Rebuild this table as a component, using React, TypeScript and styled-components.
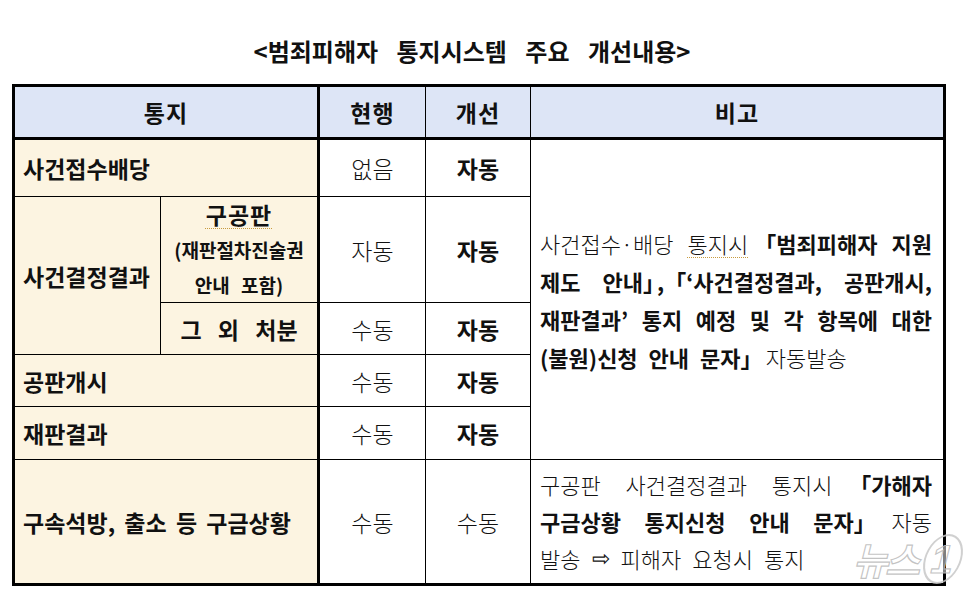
import React from 'react';
import styled, { createGlobalStyle } from 'styled-components';

const GlobalStyle = createGlobalStyle`
  html, body {
    margin: 0;
    padding: 0;
    background: #ffffff;
  }
  body {
    font-family: 'Noto Sans CJK KR', 'Noto Sans', sans-serif;
    color: #111111;
  }
`;

const Page = styled.div`
  position: relative;
  width: 972px;
  height: 598px;
  padding-left: 12px;
  box-sizing: border-box;
  overflow: hidden;
`;

const Title = styled.h1`
  margin: 0;
  width: 920px;
  height: 84px;
  padding-top: 35px;
  box-sizing: border-box;
  text-align: center;
  font-size: 24px;
  font-weight: 700;
  line-height: 32px;
  word-spacing: 13px;
`;

const Table = styled.table`
  border-collapse: collapse;
  table-layout: fixed;
  width: 934px;
  border: 3px solid #000;
`;

const Row = styled.tr<{ $h: number }>`
  height: ${(p) => p.$h}px;
`;

const HeadCell = styled.th<{ $edge?: boolean }>`
  padding: 0;
  background: #dde5f6;
  border: 1px solid #000;
  border-bottom: 3px solid #000;
  border-left: ${(p) => (p.$edge ? '3px' : '1px')} solid #000;
  font-size: 23px;
  font-weight: 700;
  text-align: center;
  vertical-align: middle;
  letter-spacing: 1px;
`;

const LabelCell = styled.td<{ $center?: boolean }>`
  padding: 0 ${(p) => (p.$center ? '0' : '8px')};
  background: #fcf4e1;
  border: 1px solid #000;
  font-size: 23px;
  font-weight: 700;
  text-align: ${(p) => (p.$center ? 'center' : 'left')};
  vertical-align: middle;
  word-spacing: 4px;
  white-space: nowrap;
`;

const SpacedLabel = styled.span`
  word-spacing: 11px;
`;

const StackLine = styled.div<{ $small?: boolean }>`
  font-size: ${(p) => (p.$small ? '19px' : '23px')};
  line-height: 35px;
  letter-spacing: ${(p) => (p.$small ? '0' : '1px')};
  word-spacing: ${(p) => (p.$small ? '7px' : '0')};
`;

const Squiggle = styled.span`
  text-decoration: underline dotted #c79a3e;
  text-underline-offset: 4px;
  text-decoration-thickness: 1px;
`;

const ValueCell = styled.td<{ $bold?: boolean; $edge?: boolean }>`
  padding: 0;
  border: 1px solid #000;
  border-left: ${(p) => (p.$edge ? '3px' : '1px')} solid #000;
  font-size: 23px;
  font-weight: ${(p) => (p.$bold ? 700 : 300)};
  text-align: center;
  vertical-align: middle;
`;

const NoteCell = styled.td<{ $lh: number }>`
  padding: 0 11px 0 9px;
  border: 1px solid #000;
  font-size: 22px;
  font-weight: 300;
  line-height: ${(p) => p.$lh}px;
  vertical-align: middle;
`;

/* one justified line: the words are spread by flex, as Word spreads them at spaces */
const NoteLine = styled.div<{ $last?: boolean }>`
  display: flex;
  justify-content: ${(p) => (p.$last ? 'flex-start' : 'space-between')};
  gap: ${(p) => (p.$last ? '11px' : '4px')};
  white-space: nowrap;
`;

const B = styled.b`
  font-weight: 700;
`;

/* full-width corner brackets: trim the empty half of the em box */
const Bracket = styled.span<{ $close?: boolean }>`
  margin-left: ${(p) => (p.$close ? '0' : '-0.36em')};
  margin-right: ${(p) => (p.$close ? '-0.36em' : '0')};
`;

const Arrow = styled.span`
  font-family: 'DejaVu Sans', sans-serif;
  font-size: 22px;
`;

const Watermark = styled.div`
  position: absolute;
  right: 10px;
  bottom: 14px;
  display: flex;
  align-items: center;
  gap: 3px;
  transform: skewX(-14deg);
  pointer-events: none;
`;

const WmText = styled.span`
  font-family: 'Noto Sans CJK KR', sans-serif;
  font-size: 38px;
  font-weight: 700;
  line-height: 44px;
  letter-spacing: -3px;
  color: rgba(255, 255, 255, 0.55);
  -webkit-text-stroke: 1.2px rgba(185, 185, 185, 0.85);
`;

const WmBadge = styled.span`
  display: inline-flex;
  align-items: center;
  justify-content: center;
  width: 34px;
  height: 46px;
  border: 2px solid rgba(200, 200, 200, 0.85);
  border-radius: 50%;
  font-family: 'Liberation Sans', sans-serif;
  font-size: 40px;
  font-weight: 700;
  line-height: 1;
  color: rgba(255, 255, 255, 0.5);
  -webkit-text-stroke: 1.2px rgba(185, 185, 185, 0.85);
`;

const statusRows = [
  { now: '없음', next: '자동' },
  { now: '자동', next: '자동' },
  { now: '수동', next: '자동' },
  { now: '수동', next: '자동' },
  { now: '수동', next: '자동' },
];

const boldWords = (text: string) => text.split(' ').map((w, i) => <B key={i}>{w}</B>);
const plainWords = (text: string) => text.split(' ').map((w, i) => <span key={i}>{w}</span>);

export default function App() {
  return (
    <Page>
      <GlobalStyle />
      <Title>&lt;범죄피해자 통지시스템 주요 개선내용&gt;</Title>
      <Table>
        <colgroup>
          <col style={{ width: 147 }} />
          <col style={{ width: 158 }} />
          <col style={{ width: 107 }} />
          <col style={{ width: 105 }} />
          <col style={{ width: 414 }} />
        </colgroup>
        <thead>
          <Row $h={53}>
            <HeadCell colSpan={2}>통지</HeadCell>
            <HeadCell $edge>현행</HeadCell>
            <HeadCell>개선</HeadCell>
            <HeadCell>비고</HeadCell>
          </Row>
        </thead>
        <tbody>
          <Row $h={58}>
            <LabelCell colSpan={2}>사건접수배당</LabelCell>
            <ValueCell $edge>{statusRows[0].now}</ValueCell>
            <ValueCell $bold>{statusRows[0].next}</ValueCell>
            <NoteCell rowSpan={5} $lh={38}>
              <NoteLine>
                <span>사건접수·배당</span>
                <Squiggle>통지시</Squiggle>
                <B>
                  <Bracket>「</Bracket>범죄피해자
                </B>
                <B>지원</B>
              </NoteLine>
              <NoteLine>
                <B>제도</B>
                <B>
                  안내<Bracket $close>」</Bracket>,「‘사건결정결과,
                </B>
                <B>공판개시,</B>
              </NoteLine>
              <NoteLine>{boldWords('재판결과’ 통지 예정 및 각 항목에 대한')}</NoteLine>
              <NoteLine $last>
                <B>(불원)신청</B>
                <B>안내</B>
                <B>
                  문자<Bracket $close>」</Bracket>
                </B>
                <span>자동발송</span>
              </NoteLine>
            </NoteCell>
          </Row>
          <Row $h={106}>
            <LabelCell rowSpan={2}>사건결정결과</LabelCell>
            <LabelCell $center>
              <StackLine>
                <Squiggle>구공판</Squiggle>
              </StackLine>
              <StackLine $small>(재판절차진술권</StackLine>
              <StackLine $small>안내 포함)</StackLine>
            </LabelCell>
            <ValueCell $edge>{statusRows[1].now}</ValueCell>
            <ValueCell $bold>{statusRows[1].next}</ValueCell>
          </Row>
          <Row $h={52}>
            <LabelCell $center>
              <SpacedLabel>그 외 처분</SpacedLabel>
            </LabelCell>
            <ValueCell $edge>{statusRows[2].now}</ValueCell>
            <ValueCell $bold>{statusRows[2].next}</ValueCell>
          </Row>
          <Row $h={52}>
            <LabelCell colSpan={2}>공판개시</LabelCell>
            <ValueCell $edge>{statusRows[3].now}</ValueCell>
            <ValueCell $bold>{statusRows[3].next}</ValueCell>
          </Row>
          <Row $h={53}>
            <LabelCell colSpan={2}>재판결과</LabelCell>
            <ValueCell $edge>{statusRows[4].now}</ValueCell>
            <ValueCell $bold>{statusRows[4].next}</ValueCell>
          </Row>
          <Row $h={125}>
            <LabelCell colSpan={2}>구속석방, 출소 등 구금상황</LabelCell>
            <ValueCell $edge>수동</ValueCell>
            <ValueCell>수동</ValueCell>
            <NoteCell $lh={37}>
              <NoteLine>
                {plainWords('구공판 사건결정결과 통지시')}
                <B>
                  <Bracket>「</Bracket>가해자
                </B>
              </NoteLine>
              <NoteLine>
                {boldWords('구금상황 통지신청 안내')}
                <B>
                  문자<Bracket $close>」</Bracket>
                </B>
                <span>자동</span>
              </NoteLine>
              <NoteLine $last>
                <span>발송</span>
                <Arrow>⇨</Arrow>
                {plainWords('피해자 요청시 통지')}
              </NoteLine>
            </NoteCell>
          </Row>
        </tbody>
      </Table>
      <Watermark>
        <WmText>뉴스</WmText>
        <WmBadge>1</WmBadge>
      </Watermark>
    </Page>
  );
}
